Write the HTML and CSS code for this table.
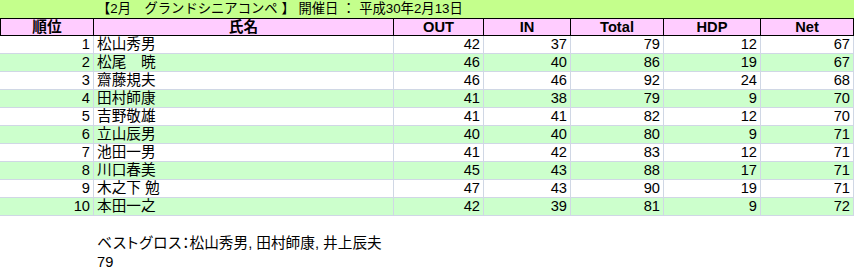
FILE: index.html
```html
<!DOCTYPE html>
<html lang="ja">
<head>
<meta charset="utf-8">
<link rel="stylesheet" href="styles.css">
</head>
<body>
<div class="sheet">
  <div class="title-row">
    <div class="cell"></div>
    <div class="title">【2月　グランドシニアコンペ 】 開催日 ： 平成30年2月13日</div>
  </div>
  <div class="row head">
    <div class="cell">順位</div>
    <div class="cell">氏名</div>
    <div class="cell">OUT</div>
    <div class="cell">IN</div>
    <div class="cell">Total</div>
    <div class="cell">HDP</div>
    <div class="cell">Net</div>
  </div>
  <div class="row"><div class="cell num">1</div><div class="cell name">松山秀男</div><div class="cell num">42</div><div class="cell num">37</div><div class="cell num">79</div><div class="cell num">12</div><div class="cell num">67</div></div>
  <div class="row alt"><div class="cell num">2</div><div class="cell name">松尾　暁</div><div class="cell num">46</div><div class="cell num">40</div><div class="cell num">86</div><div class="cell num">19</div><div class="cell num">67</div></div>
  <div class="row"><div class="cell num">3</div><div class="cell name">齋藤規夫</div><div class="cell num">46</div><div class="cell num">46</div><div class="cell num">92</div><div class="cell num">24</div><div class="cell num">68</div></div>
  <div class="row alt"><div class="cell num">4</div><div class="cell name">田村師康</div><div class="cell num">41</div><div class="cell num">38</div><div class="cell num">79</div><div class="cell num">9</div><div class="cell num">70</div></div>
  <div class="row"><div class="cell num">5</div><div class="cell name">吉野敬雄</div><div class="cell num">41</div><div class="cell num">41</div><div class="cell num">82</div><div class="cell num">12</div><div class="cell num">70</div></div>
  <div class="row alt"><div class="cell num">6</div><div class="cell name">立山辰男</div><div class="cell num">40</div><div class="cell num">40</div><div class="cell num">80</div><div class="cell num">9</div><div class="cell num">71</div></div>
  <div class="row"><div class="cell num">7</div><div class="cell name">池田一男</div><div class="cell num">41</div><div class="cell num">42</div><div class="cell num">83</div><div class="cell num">12</div><div class="cell num">71</div></div>
  <div class="row alt"><div class="cell num">8</div><div class="cell name">川口春美</div><div class="cell num">45</div><div class="cell num">43</div><div class="cell num">88</div><div class="cell num">17</div><div class="cell num">71</div></div>
  <div class="row"><div class="cell num">9</div><div class="cell name">木之下 勉</div><div class="cell num">47</div><div class="cell num">43</div><div class="cell num">90</div><div class="cell num">19</div><div class="cell num">71</div></div>
  <div class="row alt"><div class="cell num">10</div><div class="cell name">本田一之</div><div class="cell num">42</div><div class="cell num">39</div><div class="cell num">81</div><div class="cell num">9</div><div class="cell num">72</div></div>
  <div class="note">
    <div><span class="kana-note">ベストグロス</span>：松山秀男, 田村師康, 井上辰夫</div>
    <div>79</div>
  </div>
</div>
</body>
</html>
```

FILE: styles.css
```css
html, body {
  margin: 0;
  padding: 0;
  background: #ffffff;
}
body {
  font-family: "Liberation Sans", "Noto Sans CJK JP", sans-serif;
  font-size: 14.67px;
  color: #000;
  font-feature-settings: "palt";
}
.sheet {
  width: 855px;
}
.title-row {
  display: grid;
  grid-template-columns: 94px 760px;
  height: 18px;
  background: #c4ff8c;
  width: 854px;
}
.title {
  padding-left: 3px;
  font-size: 13.33px;
  line-height: 18px;
  white-space: nowrap;
  font-feature-settings: normal;
}
.row {
  display: grid;
  grid-template-columns: 94px 300px 90px 87px 93px 97px 93px;
  height: 18px;
  width: 854px;
}
.row .cell {
  box-sizing: border-box;
  border-right: 1px solid #d0d7e5;
  border-bottom: 1px solid #d0d7e5;
  line-height: 17px;
  white-space: nowrap;
  overflow: hidden;
}
.row.alt {
  background: #ccffcc;
}
.row.head {
  background: #ffccff;
  font-weight: bold;
  text-align: center;
  border-top: 1px solid #000;
  box-sizing: border-box;
}
.row.head .cell {
  border-right-color: #000;
  border-bottom-color: #000;
  line-height: 16px;
}
.row.head .cell:first-child {
  border-left: 1px solid #000;
}
.num {
  text-align: right;
  padding-right: 3px;
}
.name {
  padding-left: 3px;
}
.note {
  padding: 18px 0 0 97px;
  line-height: 19px;
}
.kana-note {
  letter-spacing: 0.8px;
}
```
